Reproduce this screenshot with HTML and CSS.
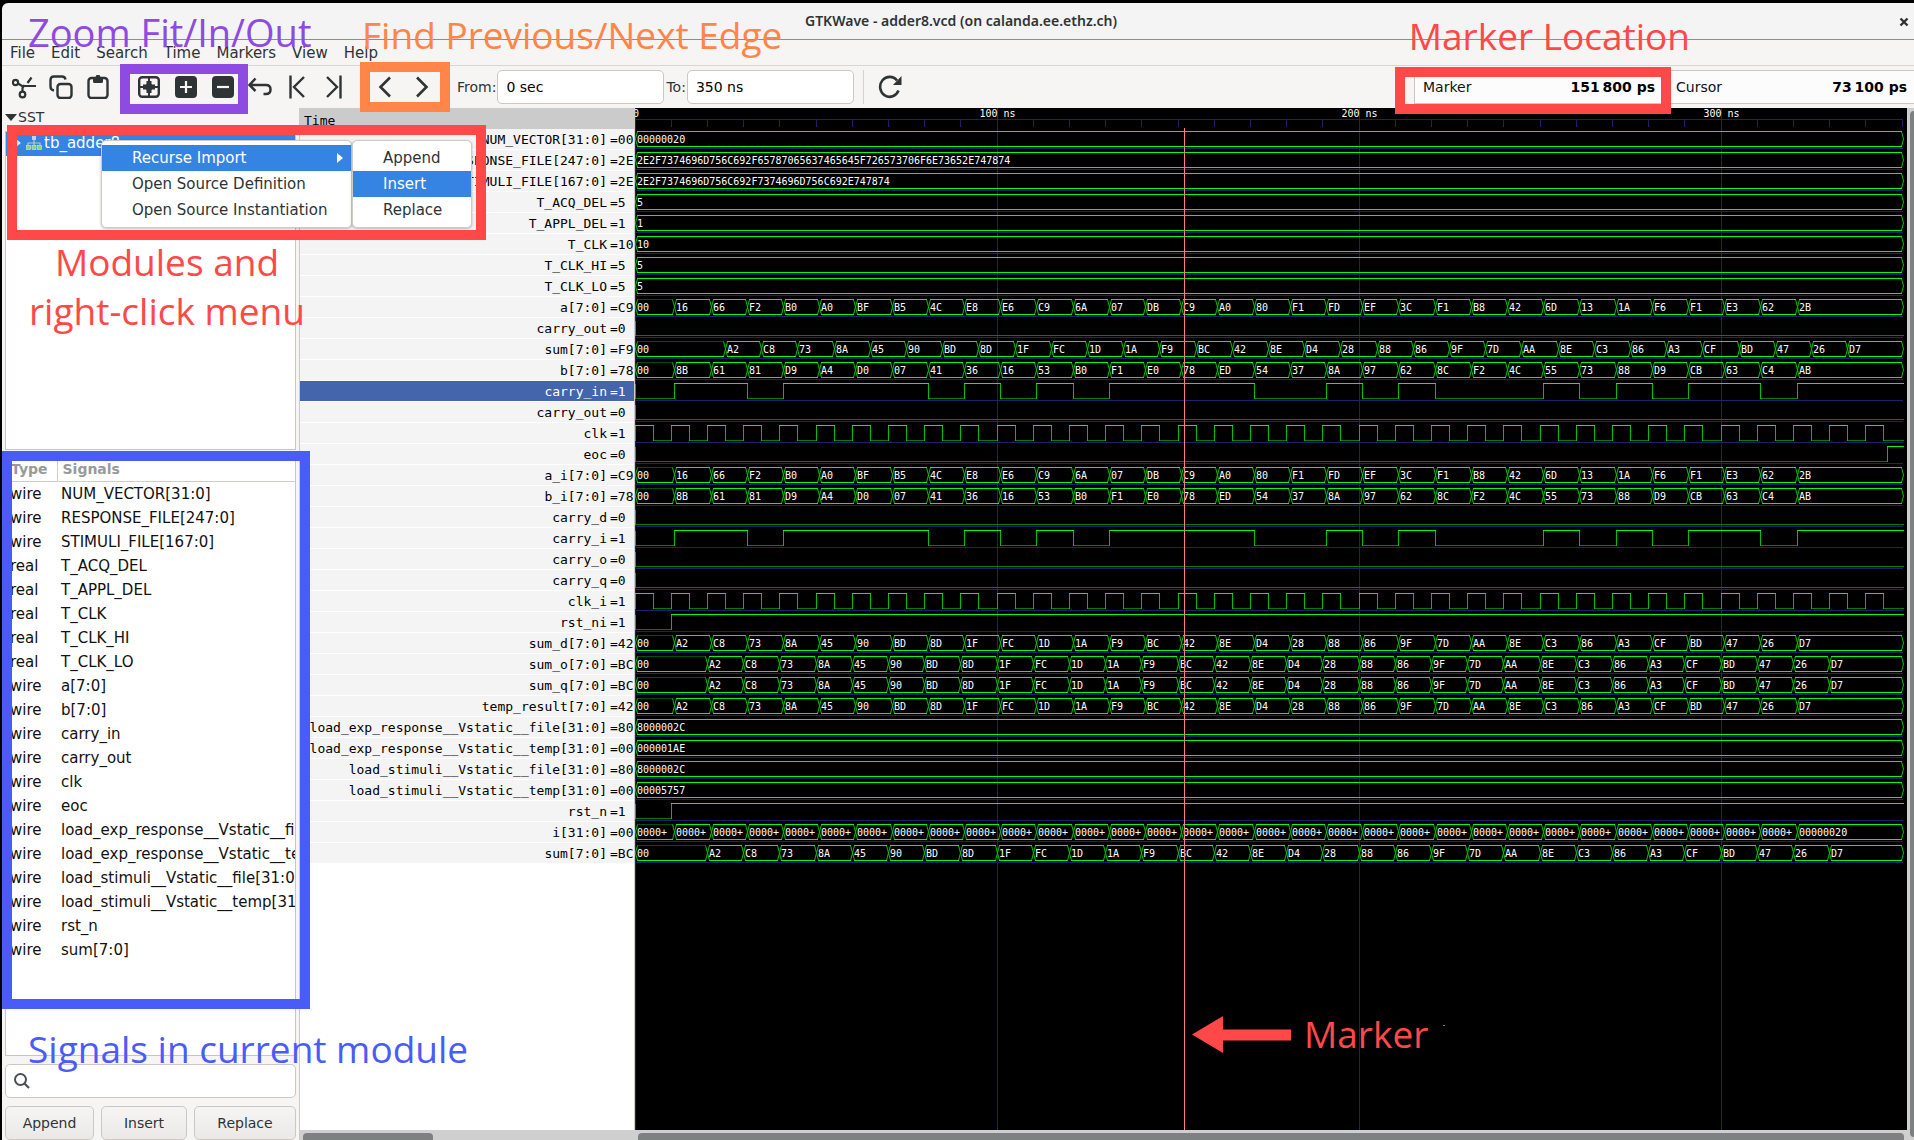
FILE: index.html
```html
<!DOCTYPE html>
<html lang="en">
<head>
<meta charset="utf-8">
<title>GTKWave - adder8.vcd</title>
<link rel="stylesheet" href="styles.css">
</head>
<body>
<div class="window">
  <header class="titlebar">
    <h1 class="title">GTKWave - adder8.vcd (on calanda.ee.ethz.ch)</h1>
    <button class="close" aria-label="Close"><svg width="10" height="10" viewBox="0 0 10 10"><path d="M1.5 1.5l7 7M8.5 1.5l-7 7" stroke="#2e3436" stroke-width="2.4"/></svg></button>
  </header>

  <nav class="menubar">
    <button>File</button><button>Edit</button><button>Search</button><button>Time</button><button>Markers</button><button>View</button><button>Help</button>
  </nav>

  <div class="toolbar">
    <div class="tools">
      <button aria-label="Cut"><svg viewBox="0 0 24 24"><g fill="none" stroke="#2e3436" stroke-width="2.2"><circle cx="3.5" cy="7.5" r="2.6"/><circle cx="10.5" cy="19.5" r="2.8"/><path d="M6 8.5l4 2.5h14M10.5 17v-4l2-3M15.500 8l4-5.500"/></g></svg></button>
      <button aria-label="Copy"><svg viewBox="0 0 24 24"><g fill="none" stroke="#2e3436" stroke-width="2.4"><path d="M5 15.500q-3.500-.5-3.500-4V5q0-3.500 3.500-3.500h8q3 0 3.500 3"/><rect x="8.500" y="9" width="14" height="14" rx="3"/></g></svg></button>
      <button aria-label="Paste"><svg viewBox="0 0 24 24"><rect x="2.500" y="3" width="19" height="20" rx="3" fill="none" stroke="#2e3436" stroke-width="2.400"/><path d="M7 2h2.500l1-2h3l1 2H17v4.500q0 1.500-1.500 1.500h-7Q7 8 7 6.500z" fill="#2e3436"/></svg></button>
    </div>
    <div class="tools">
      <button aria-label="Zoom fit"><svg viewBox="0 0 24 24"><rect x="2.200" y="2.200" width="19.600" height="19.600" rx="3" fill="none" stroke="#2e3436" stroke-width="2.400"/><path d="M12 2v20M2 12h20" stroke="#2e3436" stroke-width="2"/><path d="M9.500 6h5v2.500q0 1 1 1H18v5h-2.500q-1 0-1 1V18h-5v-2.500q0-1-1-1H6v-5h2.500q1 0 1-1z" fill="#2e3436"/></svg></button>
      <button aria-label="Zoom in"><svg viewBox="0 0 24 24"><rect x="1" y="1" width="22" height="22" rx="4" fill="#2e3436"/><path d="M12 6v12M6 12h12" stroke="#f6f5f4" stroke-width="2.200"/></svg></button>
      <button aria-label="Zoom out"><svg viewBox="0 0 24 24"><rect x="1" y="1" width="22" height="22" rx="4" fill="#2e3436"/><path d="M6 12h12" stroke="#f6f5f4" stroke-width="2.200"/></svg></button>
      <button aria-label="Zoom undo"><svg viewBox="0 0 24 24"><path d="M7.500 3.500L1.500 10l6 6M1.500 10H18q4.500 0 4.500 4.500T18 19h-2.500" fill="none" stroke="#2e3436" stroke-width="2.500"/></svg></button>
      <button aria-label="Zoom to start"><svg viewBox="0 0 24 24"><path d="M5.500 0.500v23M19 2L9 12l10 10" fill="none" stroke="#2e3436" stroke-width="2.400"/></svg></button>
      <button aria-label="Zoom to end"><svg viewBox="0 0 24 24"><path d="M18.500 0.500v23M5 2l10 10L5 22" fill="none" stroke="#2e3436" stroke-width="2.400"/></svg></button>
    </div>
    <div class="tools">
      <button aria-label="Find previous edge"><svg viewBox="0 0 24 24"><path d="M17 2.500L7.500 12l9.500 9.500" fill="none" stroke="#2e3436" stroke-width="2.600"/></svg></button>
      <button aria-label="Find next edge"><svg viewBox="0 0 24 24"><path d="M7 2.500L16.500 12 7 21.500" fill="none" stroke="#2e3436" stroke-width="2.600"/></svg></button>
    </div>
    <div class="range">
      <label for="from">From:</label><input id="from" type="text" value="0 sec">
      <label for="to">To:</label><input id="to" type="text" value="350 ns">
    </div>
    <button class="reload" aria-label="Reload"><svg viewBox="0 0 24 24"><path d="M20.500 15.500A9.500 10 0 1 1 19 5.500" fill="none" stroke="#2e3436" stroke-width="2.600"/><path d="M23.500 1v9h-8.500z" fill="#2e3436"/></svg></button>
    <dl class="readout">
      <div><dt>Marker</dt><dd>151&#8201;800 ps</dd></div>
      <div><dt>Cursor</dt><dd>73&#8201;100 ps</dd></div>
    </dl>
  </div>

  <main class="panes">
    <section class="side">
      <h2 class="sst"><svg width="12" height="7" viewBox="0 0 12 7"><path d="M0 0h12L6 7z" fill="#2e3436"/></svg>SST</h2>
      <div class="tree">
        <div class="node">
          <svg class="expander" width="6" height="8" viewBox="0 0 6 8"><path d="M0 0l5 4-5 4z" fill="#dbe8f8"/></svg>
          <svg width="16" height="14" viewBox="0 0 16 14"><rect x="6" y="0" width="4" height="4" fill="#bcd4f2"/><path d="M8 4v3M2 9V7h12v2M8 7v2" fill="none" stroke="#c8c4b8" stroke-width="1.200"/><g fill="#8fd17b" stroke="#d8edcf" stroke-width=".6"><rect x=".5" y="9.500" width="4" height="4"/><rect x="6" y="9.500" width="4" height="4"/><rect x="11.500" y="9.500" width="4" height="4"/></g></svg>
          <span>tb_adder8</span>
        </div>
      </div>
      <div class="list">
        <table>
          <thead><tr><th class="type">Type</th><th>Signals</th></tr></thead>
          <tbody>
            <tr><td>wire</td><td>NUM_VECTOR[31:0]</td></tr>
            <tr><td>wire</td><td>RESPONSE_FILE[247:0]</td></tr>
            <tr><td>wire</td><td>STIMULI_FILE[167:0]</td></tr>
            <tr><td>real</td><td>T_ACQ_DEL</td></tr>
            <tr><td>real</td><td>T_APPL_DEL</td></tr>
            <tr><td>real</td><td>T_CLK</td></tr>
            <tr><td>real</td><td>T_CLK_HI</td></tr>
            <tr><td>real</td><td>T_CLK_LO</td></tr>
            <tr><td>wire</td><td>a[7:0]</td></tr>
            <tr><td>wire</td><td>b[7:0]</td></tr>
            <tr><td>wire</td><td>carry_in</td></tr>
            <tr><td>wire</td><td>carry_out</td></tr>
            <tr><td>wire</td><td>clk</td></tr>
            <tr><td>wire</td><td>eoc</td></tr>
            <tr><td>wire</td><td>load_exp_response__Vstatic__file[31:0]</td></tr>
            <tr><td>wire</td><td>load_exp_response__Vstatic__temp[31:0]</td></tr>
            <tr><td>wire</td><td>load_stimuli__Vstatic__file[31:0]</td></tr>
            <tr><td>wire</td><td>load_stimuli__Vstatic__temp[31:0]</td></tr>
            <tr><td>wire</td><td>rst_n</td></tr>
            <tr><td>wire</td><td>sum[7:0]</td></tr>
          </tbody>
        </table>
      </div>
      <div class="search">
        <svg width="16" height="16" viewBox="0 0 16 16"><circle cx="6.500" cy="6.500" r="5.500" fill="none" stroke="#4a5052" stroke-width="2"/><path d="M10.500 10.500l4.500 4.500" stroke="#4a5052" stroke-width="2.200"/></svg>
        <input type="text" aria-label="Filter signals">
      </div>
      <div class="actions"><button>Append</button><button>Insert</button><button>Replace</button></div>
    </section>

    <section class="names">
      <h2 class="timehead">Time</h2>
      <div class="rows" id="rows"></div>
      <div class="hscroll"><span class="thumb short"></span></div>
    </section>

    <section class="waves">
      <div class="canvas" id="canvas"></div>
      <div class="hscroll"><span class="thumb"></span></div>
    </section>
    <div class="vscroll"><span></span></div>
  </main>
</div>

<div class="popup context">
  <button class="on">Recurse Import<svg width="6" height="10" viewBox="0 0 6 10"><path d="M0 0l6 5-6 5z" fill="#fff"/></svg></button>
  <button>Open Source Definition</button>
  <button>Open Source Instantiation</button>
</div>
<div class="popup submenu">
  <button>Append</button>
  <button class="on">Insert</button>
  <button>Replace</button>
</div>

<div class="frame f-zoom"></div>
<div class="frame f-edge"></div>
<div class="frame f-marker"></div>
<div class="frame f-modules"></div>
<div class="frame f-signals"></div>
<p class="note large n-zoom">Zoom Fit/In/Out</p>
<p class="note n-edge">Find Previous/Next Edge</p>
<p class="note n-location">Marker Location</p>
<p class="note n-modules">Modules and<br>right-click menu</p>
<p class="note n-signals">Signals in current module</p>
<p class="note n-marker">Marker</p>
<svg class="arrow" width="254" height="37" viewBox="0 0 254 37"><path d="M0 18.500L31 0v13.500h68v11H31V37z" fill="#ff4848"/><path d="M251 9h2v1h-2z" fill="#ff4848"/></svg>
<script src="waves.js"></script>
</body>
</html>
```
FILE: styles.css
```css
* { box-sizing: border-box; }
html, body { margin: 0; }
body {
  background: #000;
  color: #2e3436;
  font: 14px/18px "DejaVu Sans", sans-serif;
  position: relative;
  overflow-x: hidden;
}
button, input { font: inherit; color: inherit; margin: 0; }
button { background: none; border: 0; padding: 0; }
h1, h2, p, dl, dd { margin: 0; font: inherit; }

.window {
  margin-left: 2px;
  padding-top: 3px;
  min-height: 100vh;
  display: flex;
  flex-direction: column;
}
.titlebar {
  height: 37px;
  flex: none;
  display: grid;
  grid-template-columns: 1fr auto 1fr;
  align-items: center;
  background: #f4f4f4;
  border-bottom: 1px solid #8b8f8b;
  border-radius: 6px 0 0 0;
}
.title { grid-column: 2; font: 600 14px/20px "Noto Sans", sans-serif; padding-left: 6px; }
.close { justify-self: end; width: 22px; height: 22px; }
.close svg { display: block; margin: 7px; }

.menubar {
  height: 26px;
  flex: none;
  display: flex;
  background: #f6f5f3;
  border-bottom: 1px solid #d8d6d3;
  font-size: 15px;
}
.menubar button { padding: 0 8px; }

.toolbar {
  height: 42px;
  flex: none;
  display: flex;
  align-items: center;
  padding-left: 4px;
  background: #f6f5f3;
}
.tools { display: flex; gap: 1px; margin-right: 15px; }
.tools button, .reload { width: 36px; height: 34px; display: grid; place-items: center; }
.tools svg, .reload svg { width: 24px; height: 24px; }
.range { display: flex; align-items: center; padding-right: 9px; border-right: 1px solid #d5d2ce; }
.range label { margin: 0 1px 0 2px; }
.range input {
  width: 167px;
  height: 34px;
  padding: 0 8px;
  border: 1px solid #cdc7c2;
  border-radius: 5px;
  background: #fff;
  color: #000;
}
.reload { margin-left: 8px; }
.readout { display: flex; margin-left: auto; height: 34px; background: #fcfcfc; border: 1px solid #cdc7c2; border-right: 0; color: #111; }
.readout div { width: 252px; display: flex; align-items: center; justify-content: space-between; padding: 0 12px 0 8px; }
.readout div + div { width: 247px; padding: 0 7px 0 9px; }
.readout dd { font-weight: 700; color: #000; }

.panes {
  flex: 1;
  display: grid;
  grid-template-columns: 298px 335px minmax(0, 1fr) 7px;
}
.side {
  display: flex;
  flex-direction: column;
  min-width: 0;
  padding: 0 3px;
  background: #f6f5f3;
  border-right: 1px solid #cdc9c5;
}
.sst { height: 23px; display: flex; align-items: center; gap: 1px; padding-bottom: 5px; }
.tree { flex: 318 0 0; background: #fff; border: 1px solid #c9c5c0; margin-bottom: 6px; }
.node { height: 24px; display: flex; align-items: center; gap: 2px; padding: 0 0 2px 10px; background: #3584e4; color: #fff; font-size: 15px; }
.expander { margin-right: 2px; }
.list { flex: 601 0 0; background: #fff; border: 1px solid #c9c5c0; overflow: hidden; color: #111; margin-bottom: 8px; font-size: 15px; }
table { border-collapse: collapse; table-layout: fixed; width: 100%; }
th, td { padding: 0 0 0 4px; height: 24px; text-align: left; white-space: nowrap; }
th { height: 25px; padding: 1px 0 0 5px; color: #979a9b; border-bottom: 1px solid #d0ccc8; font-size: 14px; }
.type { width: 51px; border-right: 1px solid #d0ccc8; }
.search {
  height: 34px;
  display: flex;
  align-items: center;
  gap: 8px;
  padding: 0 8px;
  margin-bottom: 8px;
  background: #fff;
  border: 1px solid #cdc7c2;
  border-radius: 5px;
}
.search input { flex: 1; min-width: 0; border: 0; outline: 0; background: none; }
.actions { display: grid; grid-template-columns: 89fr 86fr 102fr; gap: 7px; }
.actions button {
  height: 34px;
  border: 1px solid #cdc7c2;
  border-radius: 5px;
  background: linear-gradient(#f6f5f3, #ebe9e7);
}

.names { display: flex; flex-direction: column; background: #fff; font: 13px/21px "DejaVu Sans Mono", monospace; color: #000; }
.timehead { height: 21px; line-height: 25px; padding-left: 4px; background: #cbcbcb; }
.rows { flex: 1; border-right: 1px solid #cbcbcb; }
.row { height: 21px; display: grid; grid-template-columns: minmax(0, 1fr) 24px; gap: 3px; background: #f4f4f4; border-bottom: 1px solid #fff; white-space: pre; overflow: hidden; }
.row span:first-child { text-align: right; }
.row.selected { background: #4464ac; color: #fff; }

.waves { display: flex; flex-direction: column; background: #000; min-width: 0; }
.canvas { flex: 1; min-height: 755px; position: relative; overflow: hidden; }
.canvas svg { position: absolute; inset: 0; }
.canvas path { fill: none; stroke-width: 1; }
.line { shape-rendering: crispEdges; }
.grid { stroke: #202070; }
.high { stroke: #00ff00; }
.low { stroke: #008000; }
.edge { stroke: #00c000; }
.zero { stroke: #005000; }
.cursor { stroke: #ff8080; }
.canvas text { fill: #fff; font: 10px "DejaVu Sans Mono", monospace; }

.hscroll { height: 10px; padding: 3px 3px 0; background: #cfcfcf; }
.thumb { display: block; height: 7px; border-radius: 4px 4px 0 0; background: #7e8181; }
.thumb.short { width: 130px; }
.vscroll { background: #cfcfcf; padding: 3px 0 3px 3px; display: flex; }
.vscroll span { flex: 1; border-radius: 4px 0 0 4px; background: #7e8181; }

.popup {
  position: absolute;
  display: flex;
  flex-direction: column;
  padding: 4px 0;
  background: #fff;
  border: 1px solid #cfcbc7;
  border-radius: 5px;
  box-shadow: 0 1px 3px rgba(0, 0, 0, .25);
  font-size: 15px;
}
.popup button { height: 26px; display: flex; align-items: center; justify-content: space-between; padding: 0 8px 0 30px; text-align: left; white-space: nowrap; }
.popup .on { background: #3584e4; color: #fff; }
.context { left: 101px; top: 140px; width: 251px; }
.submenu { left: 352px; top: 140px; width: 120px; }

.frame { position: absolute; border: 10px solid; }
.f-zoom { left: 120px; top: 64px; width: 128px; height: 50px; border-color: #8f4ae2; }
.f-edge { left: 360px; top: 62px; width: 90px; height: 50px; border-color: #ff8548; }
.f-marker { right: 243px; top: 67px; width: 276px; height: 47px; border-color: #ff4848; }
.f-modules { left: 7px; top: 125px; width: 479px; height: 115px; border-color: #ff4848; }
.f-signals { left: 2px; top: 451px; width: 308px; height: 558px; border-color: #4a5cf8; }

.note { position: absolute; font: 37px/49px "Open Sans", sans-serif; white-space: nowrap; }
.note.large { font-size: 38px; }
.n-zoom { left: 28px; top: 8px; color: #8f4ae2; }
.n-edge { left: 362px; top: 10px; color: #ff8548; }
.n-location { right: 224px; top: 11px; color: #ff4848; }
.n-modules { left: 29px; top: 237px; color: #ff4848; text-align: center; }
.n-signals { left: 28px; top: 1024px; color: #4a5cf8; }
.n-marker { left: 1304px; top: 1009px; color: #ff4848; }
.arrow { position: absolute; left: 1192px; top: 1016px; }
```
FILE: waves.js
```js
// Signal data for adder8.vcd; times are in nanoseconds.
const END = 350;
const A = "16 66 F2 B0 A0 BF B5 4C E8 E6 C9 6A 07 DB C9 A0 80 F1 FD EF 3C F1 B8 42 6D 13 1A F6 F1 E3 62 2B".split(" ");
const B = "8B 61 81 D9 A4 D0 07 41 36 16 53 B0 F1 E0 78 ED 54 37 8A 97 62 8C F2 4C 55 73 88 D9 CB 63 C4 AB".split(" ");
const S = "A2 C8 73 8A 45 90 BD 8D 1F FC 1D 1A F9 BC 42 8E D4 28 88 86 9F 7D AA 8E C3 86 A3 CF BD 47 26 D7".split(" ");
const I = Array(31).fill("0000+").concat("00000020");

const steps = (first, values, init = "00") => ({ bus: [[0, init], ...values.map((v, i) => [first + 10 * i, v])] });
const fixed = v => ({ bus: [[0, v]] });
const bit = (start, ...toggles) => ({ start, toggles });
const LOW = bit(0);
const CLK = bit(1, ...Array.from({ length: 69 }, (_, i) => 5 * (i + 1)));
const CARRY = bit(0, 11, 31, 41, 81, 91, 101, 111, 121, 131, 171, 191, 201, 211, 221, 251, 261, 271, 281, 291, 311, 321);

const SIGNALS = [
  ["NUM_VECTOR[31:0]", "00", fixed("00000020")],
  ["RESPONSE_FILE[247:0]", "2E", fixed("2E2F7374696D756C692F65787065637465645F726573706F6E73652E747874")],
  ["STIMULI_FILE[167:0]", "2E", fixed("2E2F7374696D756C692F7374696D756C692E747874")],
  ["T_ACQ_DEL", "5", fixed("5")],
  ["T_APPL_DEL", "1", fixed("1")],
  ["T_CLK", "10", fixed("10")],
  ["T_CLK_HI", "5", fixed("5")],
  ["T_CLK_LO", "5", fixed("5")],
  ["a[7:0]", "C9", steps(11, A)],
  ["carry_out", "0", LOW],
  ["sum[7:0]", "F9", steps(25, S)],
  ["b[7:0]", "78", steps(11, B)],
  ["carry_in", "1", CARRY, true],
  ["carry_out", "0", LOW],
  ["clk", "1", CLK],
  ["eoc", "0", bit(0, 346)],
  ["a_i[7:0]", "C9", steps(11, A)],
  ["b_i[7:0]", "78", steps(11, B)],
  ["carry_d", "0", LOW],
  ["carry_i", "1", CARRY],
  ["carry_o", "0", LOW],
  ["carry_q", "0", LOW],
  ["clk_i", "1", CLK],
  ["rst_ni", "1", bit(0, 10)],
  ["sum_d[7:0]", "42", steps(11, S)],
  ["sum_o[7:0]", "BC", steps(20, S)],
  ["sum_q[7:0]", "BC", steps(20, S)],
  ["temp_result[7:0]", "42", steps(11, S)],
  ["load_exp_response__Vstatic__file[31:0]", "80", fixed("8000002C")],
  ["load_exp_response__Vstatic__temp[31:0]", "00", fixed("000001AE")],
  ["load_stimuli__Vstatic__file[31:0]", "80", fixed("8000002C")],
  ["load_stimuli__Vstatic__temp[31:0]", "00", fixed("00005757")],
  ["rst_n", "1", bit(0, 10)],
  ["i[31:0]", "00", steps(11, I, "0000+")],
  ["sum[7:0]", "BC", steps(20, S)],
];

document.getElementById("rows").innerHTML = SIGNALS.map(([name, value, , selected]) =>
  `<div class="row${selected ? " selected" : ""}"><span>${name}</span><span>=${value}</span></div>`).join("");

const HEAD = 21, ROW = 21;
const canvas = document.getElementById("canvas");

function draw() {
  const W = canvas.clientWidth, H = canvas.clientHeight;
  const x = t => Math.floor(t * (W - 5) / END) + 0.5;
  const d = { grid: "", high: "", low: "", edge: "", zero: "", slope: "" };
  let texts = "";
  const text = (px, py, s, anchor = "start") => { texts += `<text x="${px}" y="${py}" text-anchor="${anchor}">${s}</text>`; };
  const h = (kind, x1, x2, y) => { d[kind] += `M${x1 - 0.5} ${y}H${x2 + 0.5}`; };

  h("grid", 0.5, x(END), 11.5);
  for (let t = 0; t <= END; t += 10) d.grid += `M${x(t)} ${t % 100 ? 11 : 0}V${t % 100 ? 19 : H}`;
  text(-2, 9, "0");
  [100, 200, 300].forEach(t => text(x(t), 9, t + " ns", "middle"));

  SIGNALS.forEach(([, , wave], i) => {
    const top = HEAD + i * ROW + 2.5, bottom = top + 15, mid = top + 7.5;
    h("grid", 0.5, x(END), top + 17);
    if (wave.bus) {
      wave.bus.forEach(([t, v], k) => {
        const next = wave.bus[k + 1];
        const x1 = x(t), x2 = next ? x(next[0]) : x(END) + 1;
        const idle = k === 0 && next;
        h(idle ? "zero" : "high", x1 + 2, x2 - 2, top);
        h("high", x1 + 2, x2 - 2, bottom);
        if (k === 0) d.slope += `M${x1 + 2} ${top}L${x1} ${mid}L${x1 + 2} ${bottom}`;
        if (next) d.slope += `M${x2 - 2} ${top}L${x2 + 2} ${bottom}M${x2 + 2} ${top}L${x2 - 2} ${bottom}`;
        else d.slope += `M${x2 - 2} ${top}L${x2} ${mid}L${x2 - 2} ${bottom}`;
        text(x1 + 1.5, top + 11.5, v);
      });
    } else {
      let level = wave.start, from = 0;
      d.edge += `M0.5 ${top}V${bottom}`;
      [...wave.toggles, END].forEach(t => {
        h(level ? "high" : "low", x(from), x(t) + (t === END ? 1 : 0), level ? top : bottom);
        if (t < END) d.edge += `M${x(t)} ${top}V${bottom}`;
        level = 1 - level;
        from = t;
      });
    }
  });

  const path = (cls, data) => `<path class="${cls}" d="${data}"/>`;
  canvas.innerHTML = `<svg width="${W}" height="${H}">` +
    path("line grid", d.grid) + path("line zero", d.zero) + path("line low", d.low) +
    path("line edge", d.edge) + path("edge", d.slope) + path("line high", d.high) + texts +
    path("line cursor", `M${x(151.8)} 20V${H}`) + "</svg>";
}
draw();
addEventListener("resize", draw);
```
